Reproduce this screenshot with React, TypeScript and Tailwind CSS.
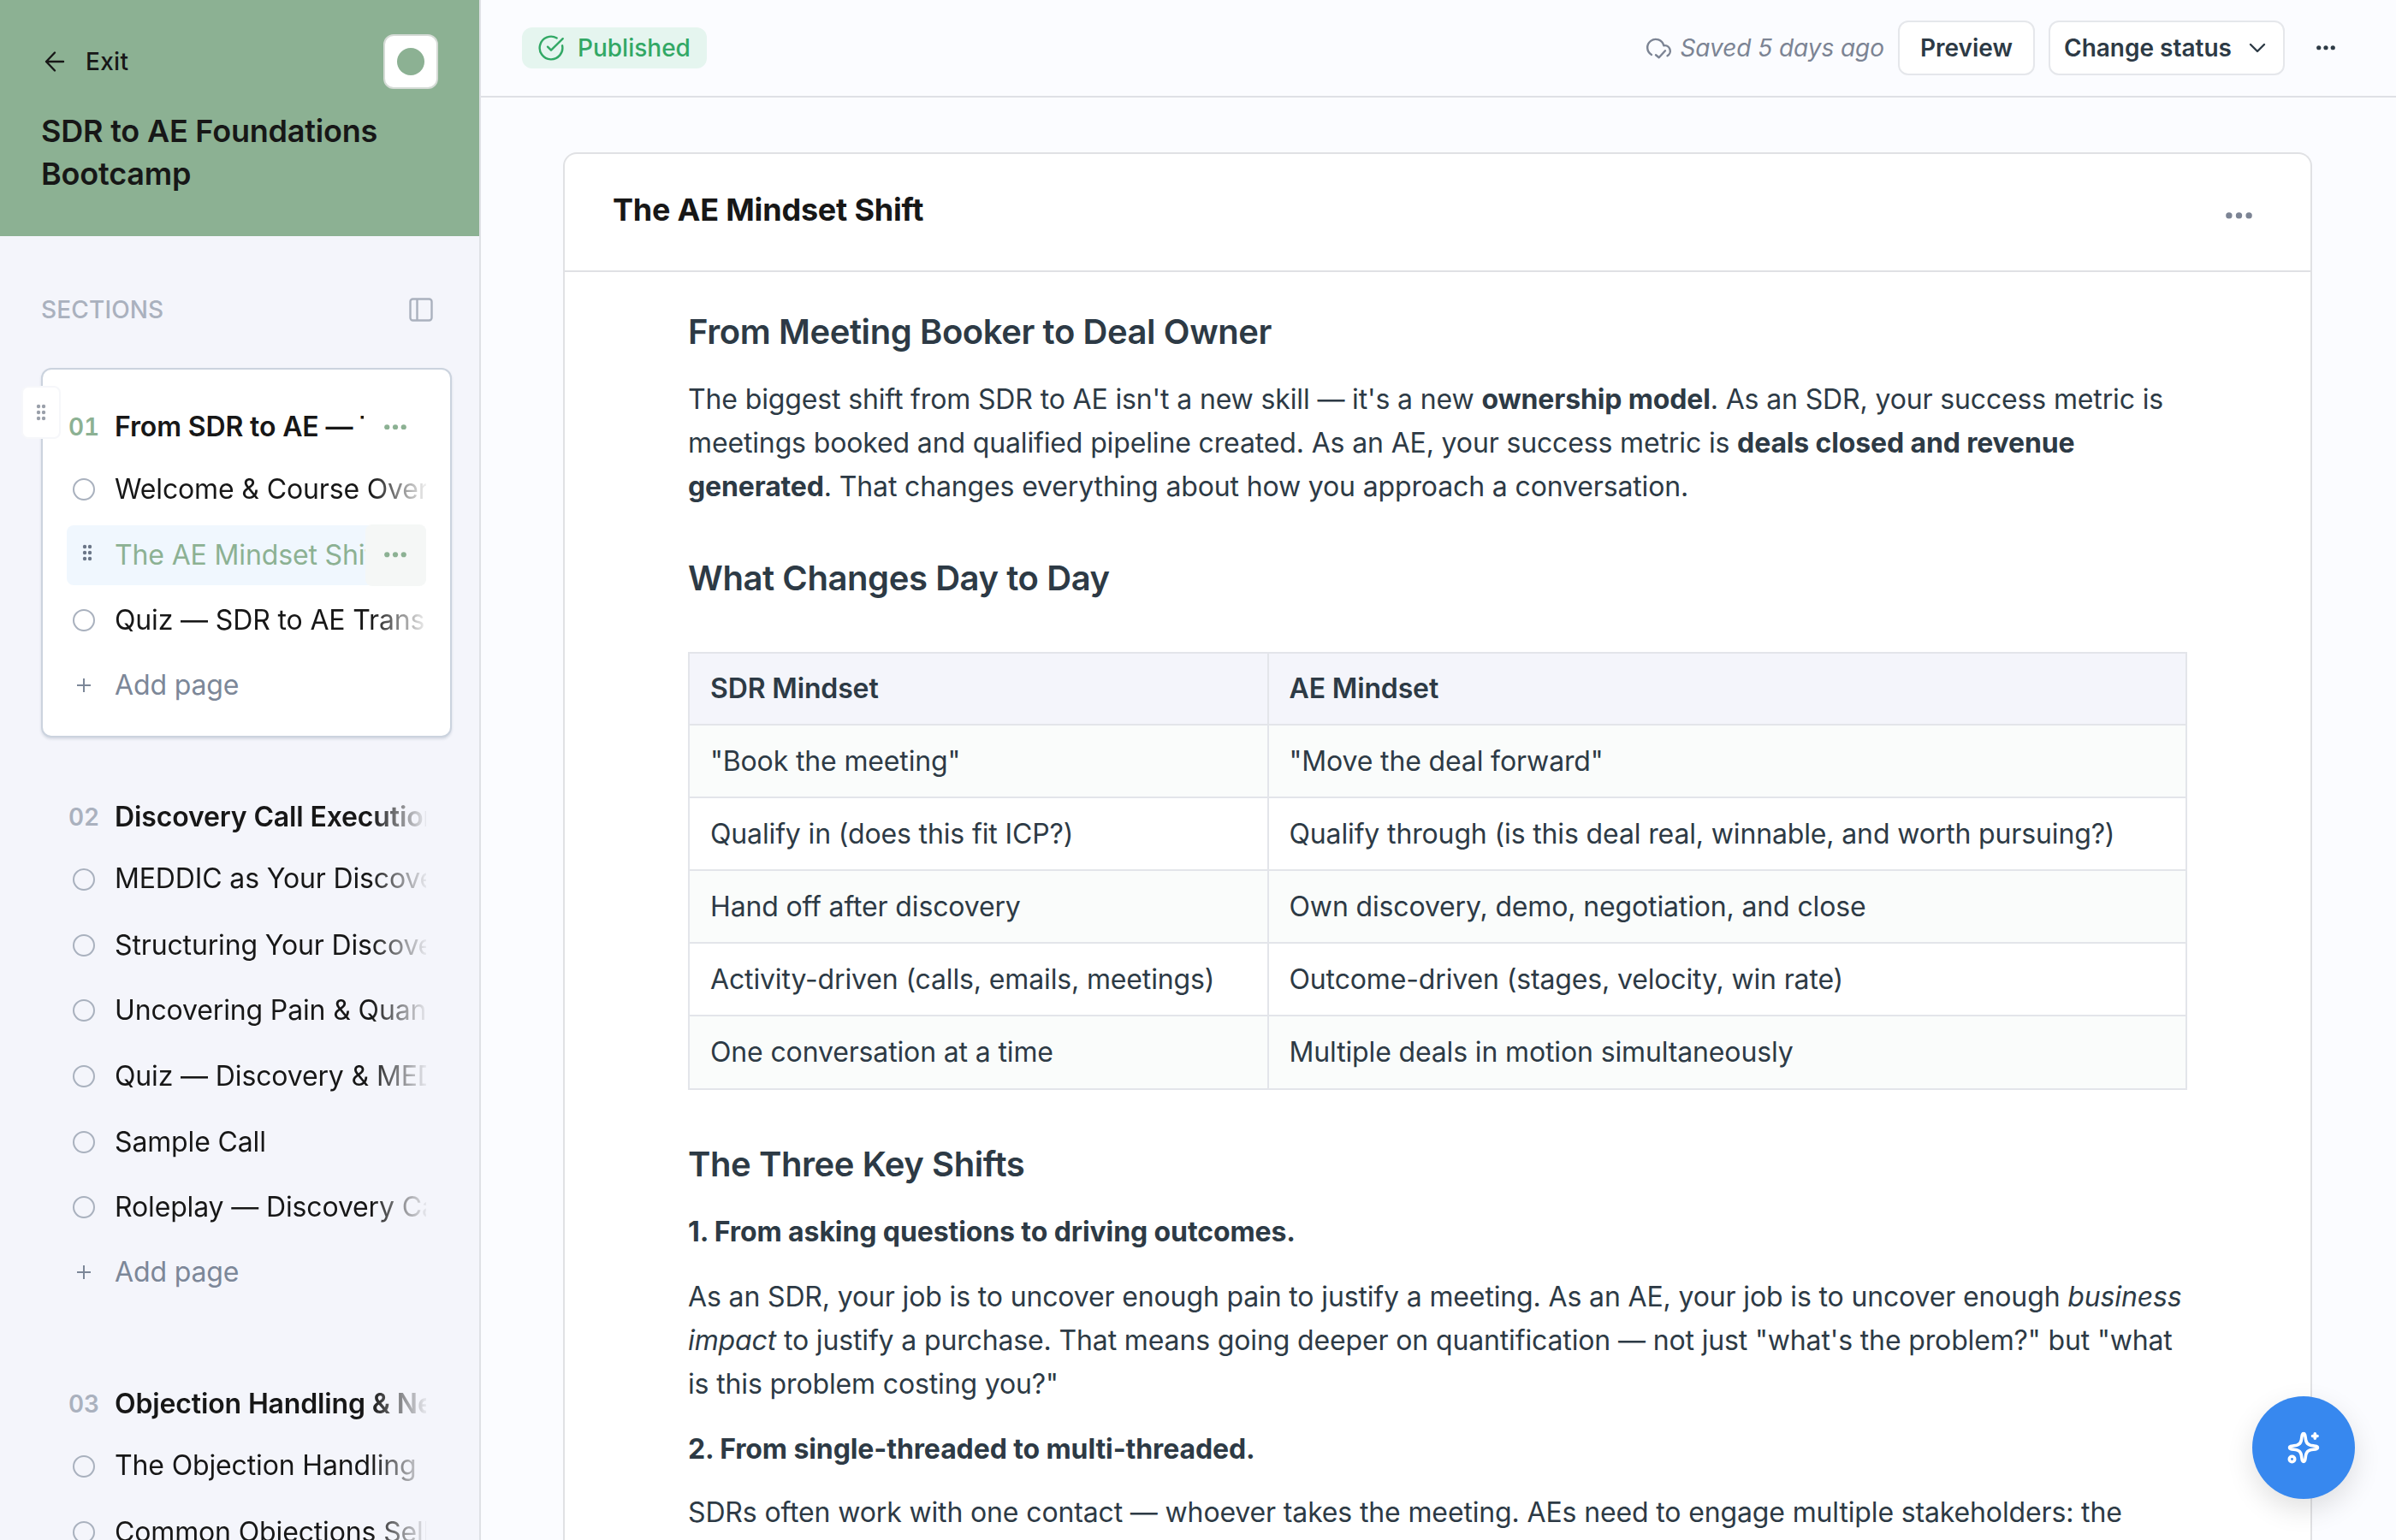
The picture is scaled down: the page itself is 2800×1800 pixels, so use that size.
import React from "react";

const ink = "text-[#171717]";

function Dots({ w, className = "" }: { w: number; className?: string }) {
  return (
    <svg width={w} height={w / 4} viewBox="0 0 32 8" className={`shrink-0 ${className}`} fill="currentColor">
      <circle cx="4" cy="4" r="3.8" />
      <circle cx="16" cy="4" r="3.8" />
      <circle cx="28" cy="4" r="3.8" />
    </svg>
  );
}

function Grip({ className = "" }: { className?: string }) {
  return (
    <svg width="12" height="20" viewBox="0 0 12 20" className={className} fill="currentColor">
      {[3, 10, 17].map((y) => (
        <g key={y}>
          <circle cx="3" cy={y} r="2.2" />
          <circle cx="9" cy={y} r="2.2" />
        </g>
      ))}
    </svg>
  );
}

function PageRow({ title, active }: { title: string; active?: boolean }) {
  if (active) {
    return (
      <div className="relative flex h-[76.6px] items-center">
        <div className="flex h-[70px] w-full items-center rounded-lg bg-[#f0f7fe] pl-[18px]">
          <Grip className="-mt-1.5 text-[#6b7688]" />
          <span className="ml-[26px] w-[294px] overflow-hidden whitespace-nowrap text-[#8cb193]">{title}</span>
        </div>
        <div className="absolute top-0.5 right-0 flex h-[72px] w-[71px] items-center justify-center rounded-lg bg-[#f5f7f6] pr-0.5 text-[#8cb193]">
          <Dots w={26} />
        </div>
      </div>
    );
  }
  return (
    <div className="flex h-[76.6px] items-center pl-[7px]">
      <span className="h-[26px] w-[26px] shrink-0 rounded-full border-2 border-[#a9b1be]" />
      <span className="ml-[23px] flex-1 overflow-hidden whitespace-nowrap mask-r-from-[300px] mask-r-to-[368px]">{title}</span>
    </div>
  );
}

function Section({ n, title, pages, current }: { n: string; title: string; pages: string[]; current?: boolean }) {
  return (
    <section
      className={`relative mb-6 rounded-xl border-2 px-7 pt-[26px] pb-[19.6px] ${
        current ? "border-[#cbd3de] bg-white shadow-[0_2px_3px_rgba(100,116,139,0.2)]" : "border-transparent"
      }`}
    >
      {current && (
        <div className="absolute top-[19px] -left-[25px] flex h-[62px] w-[46px] items-center justify-center rounded-lg border-2 border-[#f6f7fa] bg-white">
          <Grip className="text-[#9aa0aa]" />
        </div>
      )}
      <div className="flex h-[80px] items-center">
        <span className={`w-[56px] pt-0.5 pl-0.5 text-[28px] font-semibold tabular-nums ${current ? "text-[#8cb193]" : "text-[#aab1be]"}`}>{n}</span>
        <span
          className={`overflow-hidden pt-0.5 font-semibold whitespace-nowrap ${
            current ? "w-[291px]" : "flex-1 mask-r-from-[300px] mask-r-to-[368px]"
          }`}
        >
          {title}
        </span>
        {current && <Dots w={26} className="mt-0.5 ml-6 text-[#8cb193]" />}
      </div>
      <div className={current ? "-mt-1" : "-mt-1 [&>div:first-child>span:last-child]:-mt-[3px]"}>
        {pages.map((p) => (
          <PageRow key={p} title={p} active={p.startsWith("The AE")} />
        ))}
      </div>
      <div className="-mt-px mb-px flex h-[76.6px] items-center pl-[12px] text-[#7c8798]">
        <svg width="16" height="16" viewBox="0 0 16 16" stroke="currentColor" strokeWidth="2">
          <path d="M8 0v16M0 8h16" />
        </svg>
        <span className="ml-[28px]">Add page</span>
      </div>
    </section>
  );
}

const sections = [
  {
    n: "01",
    title: "From SDR to AE — The Transition",
    pages: ["Welcome & Course Overview", "The AE Mindset Shift", "Quiz — SDR to AE Transition"],
    current: true,
  },
  {
    n: "02",
    title: "Discovery Call Execution",
    pages: [
      "MEDDIC as Your Discovery Framework",
      "Structuring Your Discovery Call",
      "Uncovering Pain & Quantifying",
      "Quiz — Discovery & MEDDIC",
      "Sample Call",
      "Roleplay — Discovery Call",
    ],
  },
  {
    n: "03",
    title: "Objection Handling & Negotiation",
    pages: ["The Objection Handling Framework", "Common Objections Sellers Face"],
  },
];

const rows = [
  ['"Book the meeting"', '"Move the deal forward"'],
  ["Qualify in (does this fit ICP?)", "Qualify through (is this deal real, winnable, and worth pursuing?)"],
  ["Hand off after discovery", "Own discovery, demo, negotiation, and close"],
  ["Activity-driven (calls, emails, meetings)", "Outcome-driven (stages, velocity, win rate)"],
  ["One conversation at a time", "Multiple deals in motion simultaneously"],
];

function Sidebar() {
  return (
    <aside className="flex w-[562px] shrink-0 flex-col overflow-hidden border-r-2 border-[#dfe1e5] bg-[#f4f5fb]">
      <header className="h-[276px] shrink-0 bg-[#8cb193] px-12 pt-10">
        <div className="flex h-16 items-center justify-between">
          <div className="flex items-center text-[28px] font-medium tracking-[0.3px]">
            <svg width="32" height="32" viewBox="0 0 32 32" fill="none" stroke="currentColor" strokeWidth="2.4" strokeLinecap="round" strokeLinejoin="round">
              <path d="M26 16H6M16 5.5L6 16l10 10.500" />
            </svg>
            <span className="ml-5">Exit</span>
          </div>
          <div className="flex h-16 w-16 items-center justify-center rounded-xl border-2 border-[#d5dbd6] bg-white">
            <span className="h-8 w-8 rounded-full bg-[#8cb193]" />
          </div>
        </div>
        <h1 className="mt-6 text-[36px] leading-[50.4px] font-semibold tracking-[-0.2px]">SDR to AE Foundations Bootcamp</h1>
      </header>
      <div className="mt-[62px] mb-[44px] flex h-12 shrink-0 items-center justify-between pr-[54px] pl-12 text-[#aab1be]">
        <span className="text-[28px] font-medium tracking-[0.15px]">SECTIONS</span>
        <svg width="28" height="28" viewBox="0 0 28 28" fill="none" stroke="currentColor" strokeWidth="2.4">
          <rect x="1.500" y="1.500" width="25" height="25" rx="3" />
          <path d="M9.500 1.500v25" />
        </svg>
      </div>
      <div className="shrink-0 pr-8 pl-12 text-[32px] tracking-[-0.14px]">
        {sections.map((s) => (
          <Section key={s.n} {...s} />
        ))}
      </div>
    </aside>
  );
}

function TopBar() {
  return (
    <div className="flex h-[114px] shrink-0 items-center justify-between border-b-2 border-[#dfe1e5] pr-[71px] pl-12 text-[28px]">
      <div className="flex h-12 items-center rounded-xl bg-[#e5f5ef] pr-[19px] pl-[18px] font-medium text-[#32a865]">
        <svg width="32" height="32" viewBox="0 0 24 24" fill="none" stroke="currentColor" strokeWidth="1.800" strokeLinecap="round" strokeLinejoin="round">
          <path d="M17 3.340A10 10 0 1 0 21.800 10" />
          <path d="m9 11 3 3L22.300 3.900" />
        </svg>
        <span className="ml-[15px]">Published</span>
      </div>
      <div className="flex items-center">
        <svg width="32" height="32" viewBox="0 0 32 32" fill="none" stroke="#7c8494" strokeWidth="2.400" strokeLinecap="round" strokeLinejoin="round">
          <path d="M7 24A9.700 9.700 0 1 1 21.300 13.300A6.400 6.400 0 0 1 25.500 25.200" />
          <path d="m12 24.300 3.700 3 7.300-8" />
        </svg>
        <span className="ml-2 tracking-[-0.05px] text-[#7c8494] italic">Saved 5 days ago</span>
        <button className="ml-4 flex h-16 w-[160px] items-center justify-center rounded-xl border-2 border-[#e5e7eb] bg-white font-semibold text-[#2d3a45]">Preview</button>
        <button className="ml-4 flex h-16 w-[276px] items-center rounded-xl border-2 border-[#e5e7eb] bg-white pl-4 font-semibold text-[#2d3a45]">
          Change status
          <svg width="20" height="12" viewBox="0 0 20 12" className="ml-5" fill="none" stroke="currentColor" strokeWidth="2.400" strokeLinecap="round" strokeLinejoin="round">
            <path d="m2 2 8 8 8-8" />
          </svg>
        </button>
        <Dots w={22} className="ml-[37px] text-[#2d3a45]" />
      </div>
    </div>
  );
}

function Lesson() {
  return (
    <article className="mt-16 mr-[98px] ml-24 flex-1 rounded-t-2xl border-2 border-b-0 border-[#e0e1e4] bg-white">
      <div className="flex h-[138px] items-center justify-between border-b-2 border-[#e0e1e4] pr-[68px] pl-14">
        <h2 className={`-mt-1.5 text-[36px] font-bold tracking-[-0.2px] ${ink}`}>The AE Mindset Shift</h2>
        <Dots w={31} className="mt-2 text-[#7c8494]" />
      </div>
      <div className="w-[1900px] pt-[42px] pl-[144px] text-[32px] leading-[51.2px] tracking-[-0.14px] text-[#2d3a45]">
        <div className="w-[1752px]">
          <h3 className="text-[40px] leading-[56px] font-semibold tracking-[-0.42px]">From Meeting Booker to Deal Owner</h3>
          <p className="mt-[25px]">
            The biggest shift from SDR to AE isn't a new skill — it's a new <b>ownership model</b>. As an SDR, your success metric is
            meetings booked and qualified pipeline created. As an AE, your success metric is <b>deals closed and revenue generated</b>. That changes
            everything about how you approach a conversation.
          </p>
          <h3 className="mt-[53px] text-[40px] leading-[56px] font-semibold tracking-[-0.42px]">What Changes Day to Day</h3>
          <table className="mt-[58px] w-full border-collapse text-left leading-[51px]">
            <thead>
              <tr className="bg-[#f4f5fb]">
                <th className="w-[676.5px] border-2 border-[#e3e5ea] px-6 pt-[15px] pb-4 font-semibold">SDR Mindset</th>
                <th className="border-2 border-[#e3e5ea] px-6 pt-[15px] pb-4 font-semibold">AE Mindset</th>
              </tr>
            </thead>
            <tbody>
              {rows.map(([a, b]) => (
                <tr key={a} className="leading-[51.2px] odd:bg-[#fafcfb]">
                  <td className="border-2 border-[#e3e5ea] px-6 py-4">{a}</td>
                  <td className="border-2 border-[#e3e5ea] px-6 py-4">{b}</td>
                </tr>
              ))}
            </tbody>
          </table>
          <h3 className="mt-[59px] text-[40px] leading-[56px] font-semibold tracking-[-0.42px]">The Three Key Shifts</h3>
          <p className="mt-[25px] font-bold tracking-[-0.1px]">1. From asking questions to driving outcomes.</p>
          <p className="mt-[24.8px]">
            As an SDR, your job is to uncover enough pain to justify a meeting. As an AE, your job is to uncover enough <i>business impact</i> to justify a
            purchase. That means going deeper on quantification — not just "what's the problem?" but "what is this problem costing you?"
          </p>
          <p className="mt-[24.8px] font-bold tracking-[-0.1px]">2. From single-threaded to multi-threaded.</p>
          <p className="mt-[22.5px]">
            SDRs often work with one contact — whoever takes the meeting. AEs need to engage multiple stakeholders: the economic buyer, the champion, and
            the technical evaluator.
          </p>
        </div>
      </div>
    </article>
  );
}

export default function App() {
  return (
    <div className={`relative flex h-[1800px] w-[2800px] overflow-hidden bg-[#fbfcff] font-['Inter',sans-serif] ${ink}`}>
      <Sidebar />
      <main className="flex min-w-0 flex-1 flex-col">
        <TopBar />
        <Lesson />
      </main>
      <button className="absolute right-12 bottom-12 flex h-[120px] w-[120px] items-center justify-center rounded-full bg-[#3788ef] text-white shadow-[0_12px_32px_rgba(0,0,0,0.12)]">
        <svg width="40" height="40" viewBox="0 0 40 40" fill="none" stroke="currentColor" strokeWidth="3.600" strokeLinecap="round" strokeLinejoin="round">
          <path d="M20 3.500c-2 0-1.800 3-2.800 8.500-.8 3.200-2 4.400-5.200 5.200-5.500 1-8.500 1-8.500 2.800s3 1.800 8.500 2.800c3.200.8 4.400 2 5.200 5.200 1 5.500.8 8.500 2.800 8.500s1.800-3 2.800-8.500c.8-3.200 2-4.400 5.200-5.200 5.500-1 8.500-1 8.500-2.800s-3-1.800-8.500-2.800c-3.200-.8-4.400-2-5.200-5.200-1-5.500-.8-8.500-2.800-8.500Z" />
          <path d="M33.300 3.700v5.600M30.500 6.500h5.600" />
          <circle cx="6.500" cy="33.500" r="3.200" />
        </svg>
      </button>
    </div>
  );
}
